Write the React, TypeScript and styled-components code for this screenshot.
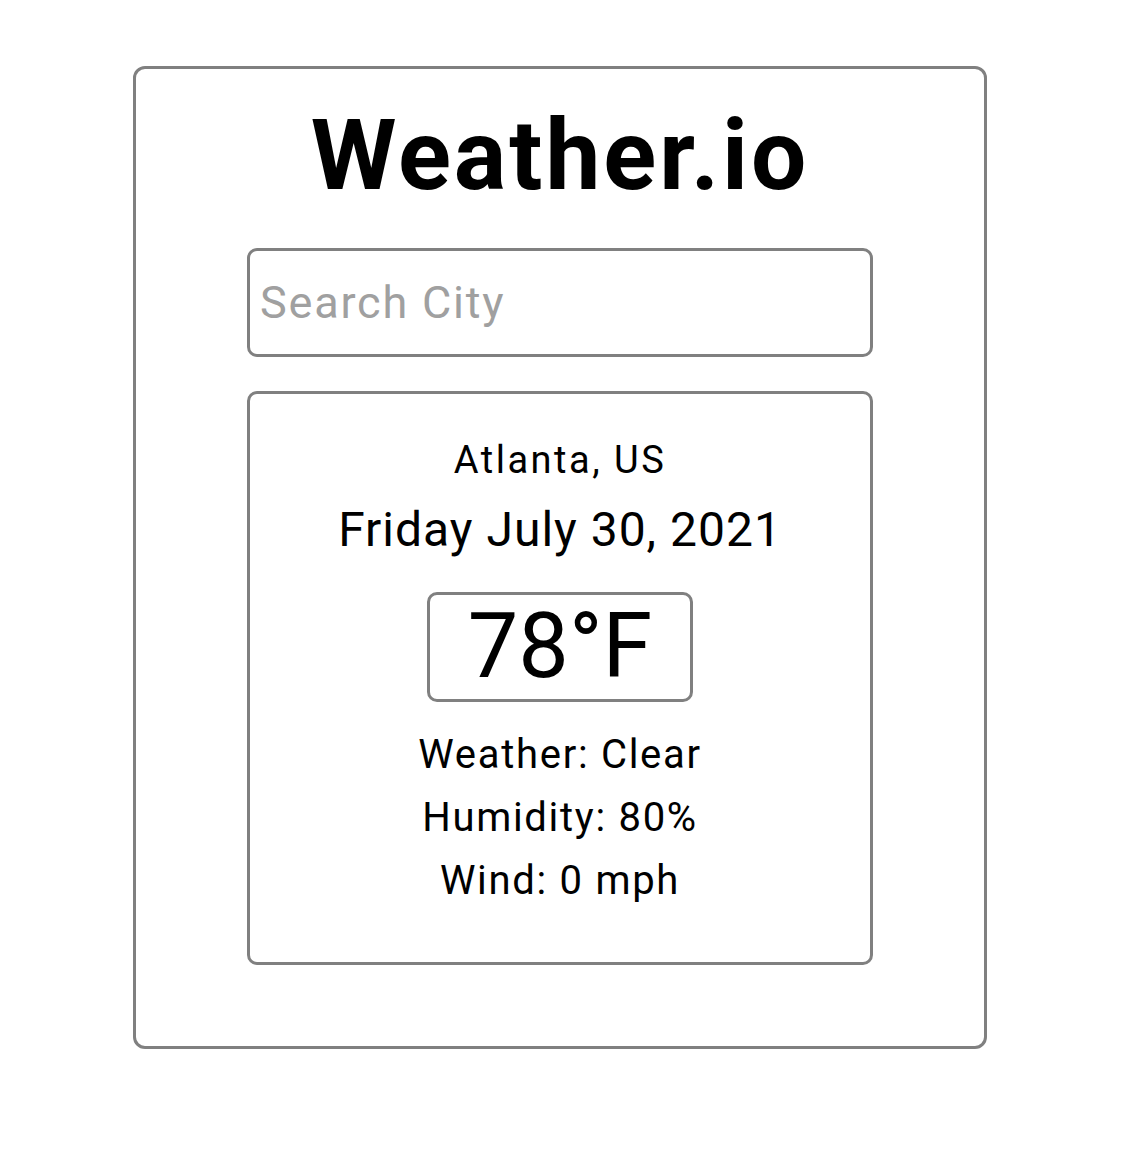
import React from "react";
import styled, { createGlobalStyle } from "styled-components";

const Global = createGlobalStyle`
  html, body { margin: 0; padding: 0; background: #ffffff; }
  body { font-family: Roboto, "Liberation Sans", Arial, sans-serif; color: #000; }
  * { box-sizing: border-box; }
`;

const Page = styled.div`
  padding: 66px 0 0 133px;
`;

const Card = styled.section`
  width: 854px;
  height: 983px;
  border: 3px solid #808080;
  border-radius: 12px;
  padding: 38px 0 0;
  display: flex;
  flex-direction: column;
  align-items: center;
`;

const Title = styled.h1`
  margin: 0;
  font-size: 98px;
  line-height: 1;
  font-weight: 700;
  letter-spacing: 3px;
`;

const Search = styled.input`
  margin-top: 43px;
  width: 626px;
  height: 109px;
  border: 3px solid #808080;
  border-radius: 10px;
  padding: 0 10px;
  font-family: Roboto, "Liberation Sans", Arial, sans-serif;
  font-size: 45px;
  letter-spacing: 1.8px;
  color: #000;
  outline: none;
  &::placeholder { color: #a0a0a0; }
`;

const Panel = styled.div`
  margin-top: 34px;
  width: 626px;
  height: 574px;
  border: 3px solid #808080;
  border-radius: 10px;
  padding-top: 47px;
  display: flex;
  flex-direction: column;
  align-items: center;
`;

const Line = styled.div<{ $size: number; $ls: number; $mt?: number }>`
  font-size: ${(p) => p.$size}px;
  letter-spacing: ${(p) => p.$ls}px;
  line-height: 1;
  margin-top: ${(p) => p.$mt ?? 0}px;
  white-space: nowrap;
`;

const TempBox = styled.div`
  margin-top: 38px;
  width: 266px;
  height: 110px;
  border: 3px solid #808080;
  border-radius: 10px;
  display: flex;
  align-items: center;
  justify-content: center;
  font-size: 90px;
  line-height: 1;
`;

const Details = styled.div`
  margin-top: 33px;
  display: flex;
  flex-direction: column;
  align-items: center;
  gap: 23px;
`;

export default function App() {
  return (
    <>
      <Global />
      <Page>
        <Card>
          <Title>Weather.io</Title>
          <Search placeholder="Search City" />
          <Panel>
            <Line $size={38} $ls={2.5}>Atlanta, US</Line>
            <Line $size={48} $ls={1} $mt={27}>Friday July 30, 2021</Line>
            <TempBox>78°F</TempBox>
            <Details>
              <Line $size={40} $ls={1.7}>Weather: Clear</Line>
              <Line $size={40} $ls={1.7}>Humidity: 80%</Line>
              <Line $size={40} $ls={1.7}>Wind: 0 mph</Line>
            </Details>
          </Panel>
        </Card>
      </Page>
    </>
  );
}
